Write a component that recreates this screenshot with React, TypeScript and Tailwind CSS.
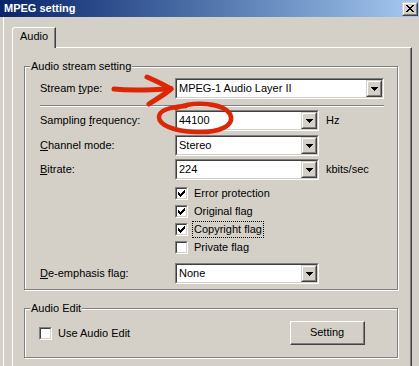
import { clsx } from 'clsx'
import type { ReactNode } from 'react'

const raisedOuter = 'border border-t-[#d4d0c8] border-l-[#d4d0c8] border-r-[#404040] border-b-[#404040]'
const raisedInner = 'border border-t-white border-l-white border-r-[#808080] border-b-[#808080]'
const sunkenOuter = 'border border-t-[#808080] border-l-[#808080] border-r-white border-b-white'
const sunkenInner = 'border border-t-[#404040] border-l-[#404040] border-r-[#d4d0c8] border-b-[#d4d0c8]'

function CloseGlyph() {
  return (
    <svg width="8" height="7" viewBox="0 0 8 7" shapeRendering="crispEdges">
      <path
        d="M0 0h2v1H0z M6 0h2v1H6z M1 1h2v1H1z M5 1h2v1H5z M2 2h4v1H2z M3 3h2v1H3z M2 4h4v1H2z M1 5h2v1H1z M5 5h2v1H5z M0 6h2v1H0z M6 6h2v1H6z"
        fill="#000"
      />
    </svg>
  )
}

function DropButton() {
  return (
    <div className={clsx('h-[17px] w-[16px] shrink-0 bg-[#d4d0c8]', raisedOuter)}>
      <div className={clsx('flex h-full items-center justify-center', raisedInner)}>
        <svg width="7" height="4" viewBox="0 0 7 4" shapeRendering="crispEdges">
          <path d="M0 0h7v1H0z M1 1h5v1H1z M2 2h3v1H2z M3 3h1v1H3z" fill="#000" />
        </svg>
      </div>
    </div>
  )
}

function Combo({ value, width }: { value: string; width: string }) {
  return (
    <div className={clsx('h-[21px] shrink-0', width, sunkenOuter)}>
      <div className={clsx('flex h-full bg-white', sunkenInner)}>
        <span className="flex-1 pl-[2px] leading-[17px]">{value}</span>
        <DropButton />
      </div>
    </div>
  )
}

function CheckBox({ checked }: { checked?: boolean }) {
  return (
    <div className={clsx('size-[13px] shrink-0', sunkenOuter)}>
      <div className={clsx('size-full bg-white p-[1px]', sunkenInner)}>
        {checked && (
          <svg width="7" height="7" viewBox="0 0 7 7" shapeRendering="crispEdges" className="block">
            <path
              d="M0 2h1v3H0z M1 3h1v3H1z M2 4h1v3H2z M3 3h1v3H3z M4 2h1v3H4z M5 1h1v3H5z M6 0h1v3H6z"
              fill="#000"
            />
          </svg>
        )}
      </div>
    </div>
  )
}

function Group({ title, className, children }: { title: string; className: string; children: ReactNode }) {
  return (
    <div
      className={clsx(
        'relative w-[374px] shrink-0 border border-[#808080] shadow-[1px_1px_0_#fff,inset_1px_1px_0_#fff]',
        className,
      )}
    >
      <span className="absolute left-[5px] top-[-7px] bg-[#d4d0c8] px-[1px] leading-[13px]">{title}</span>
      {children}
    </div>
  )
}

function Row({ label, children }: { label: ReactNode; children: ReactNode }) {
  return (
    <div className="flex h-[21px] items-center">
      <span className="w-[135px] shrink-0">{label}</span>
      {children}
    </div>
  )
}

const flags = [
  { label: 'Error protection', checked: true },
  { label: 'Original flag', checked: true },
  { label: 'Copyright flag', checked: true, focus: true },
  { label: 'Private flag', checked: false },
]

export default function App() {
  return (
    <div className="relative flex h-[366px] w-[419px] flex-col overflow-hidden bg-[#d4d0c8] font-['Liberation_Sans',Arial,sans-serif] text-[11px] text-black">
      {/* title bar */}
      <div className="flex h-[17px] shrink-0 items-center justify-between bg-linear-to-r from-[#0a246a] to-[#a6caf0] pl-[4px] pr-[1px]">
        <span className="font-bold text-white">MPEG setting</span>
        <div className={clsx('h-[14px] w-[16px] bg-[#d4d0c8]', raisedOuter)}>
          <div className={clsx('flex h-full items-center justify-center', raisedInner)}>
            <CloseGlyph />
          </div>
        </div>
      </div>

      <div className="ml-[3px] flex flex-1 flex-col border-l border-white pl-[8px] pt-[10px]">
        {/* tab */}
        <div className="relative z-10 -mb-px h-[21px] w-[44px] rounded-tl-[3px] border-l border-t border-r border-l-white border-t-white border-r-[#404040] bg-[#d4d0c8] pt-[1px] text-center leading-[14px] shadow-[inset_-1px_0_0_#808080]">
          Audio
        </div>

        {/* tab page */}
        <div className="flex w-[400px] flex-1 flex-col border-l border-t border-r border-l-white border-t-white border-r-[#404040] pl-[11px] pt-[18px] shadow-[inset_-1px_0_0_#808080]">
          <Group title="Audio stream setting" className="h-[224px]">
            <div className="flex flex-col pl-[15px] pt-[11px]">
              <Row
                label={
                  <>
                    Stream <span className="underline">t</span>ype:
                  </>
                }
              >
                <Combo value="MPEG-1 Audio Layer II" width="w-[209px]" />
              </Row>
              <div className="mt-[6px] h-[2px] w-[344px] border-b border-t border-b-white border-t-[#808080]" />
              <div className="mt-[3px]">
                <Row
                  label={
                    <>
                      Sampling <span className="underline">f</span>requency:
                    </>
                  }
                >
                  <Combo value="44100" width="w-[144px]" />
                  <span className="ml-[7px]">Hz</span>
                </Row>
              </div>
              <div className="mt-[4px]">
                <Row
                  label={
                    <>
                      <span className="underline">C</span>hannel mode:
                    </>
                  }
                >
                  <Combo value="Stereo" width="w-[144px]" />
                </Row>
              </div>
              <div className="mt-[3px]">
                <Row
                  label={
                    <>
                      <span className="underline">B</span>itrate:
                    </>
                  }
                >
                  <Combo value="224" width="w-[144px]" />
                  <span className="ml-[7px]">kbits/sec</span>
                </Row>
              </div>

              <div className="ml-[135px] mt-[7px] flex flex-col gap-[5px]">
                {flags.map((f) => (
                  <div key={f.label} className="flex h-[13px] items-center">
                    <CheckBox checked={f.checked} />
                    <span
                      className={clsx(
                        'ml-[4px] border px-[1px] leading-[15px]',
                        f.focus ? 'border-dotted border-black' : 'border-transparent',
                      )}
                    >
                      {f.label}
                    </span>
                  </div>
                ))}
              </div>

              <div className="mt-[9px]">
                <Row
                  label={
                    <>
                      <span className="underline">D</span>e-emphasis flag:
                    </>
                  }
                >
                  <Combo value="None" width="w-[144px]" />
                </Row>
              </div>
            </div>
          </Group>

          <Group title="Audio Edit" className="mt-[18px] h-[50px]">
            <div className="flex h-full items-center pl-[14px] pr-[32px]">
              <CheckBox />
              <span className="ml-[6px]">Use Audio Edit</span>
              <div className={clsx('ml-auto h-[24px] w-[75px] bg-[#d4d0c8]', 'border border-t-white border-l-white border-r-[#404040] border-b-[#404040]')}>
                <div className="flex h-full items-center justify-center border-b border-r border-b-[#808080] border-r-[#808080]">
                  Setting
                </div>
              </div>
            </div>
          </Group>
        </div>
      </div>

      {/* red hand-drawn annotations */}
      <svg
        className="pointer-events-none absolute inset-0 z-20"
        width="419"
        height="366"
        viewBox="0 0 419 366"
        fill="none"
        stroke="#dd2606"
        strokeLinecap="round"
        strokeLinejoin="round"
      >
        <path d="M114 89 C 132 91, 152 90, 171 88.5" strokeWidth="5" />
        <path d="M147 77 C 156 81, 165 85, 171 89 C 164 95, 155 100, 149 104" strokeWidth="5" />
        <path
          d="M176 108 C 196 101, 223 103, 230 114 C 236 126, 218 133, 196 132 C 173 131, 159 125, 159 117 C 159 110, 170 107, 186 106"
          strokeWidth="4.5"
        />
      </svg>
    </div>
  )
}
